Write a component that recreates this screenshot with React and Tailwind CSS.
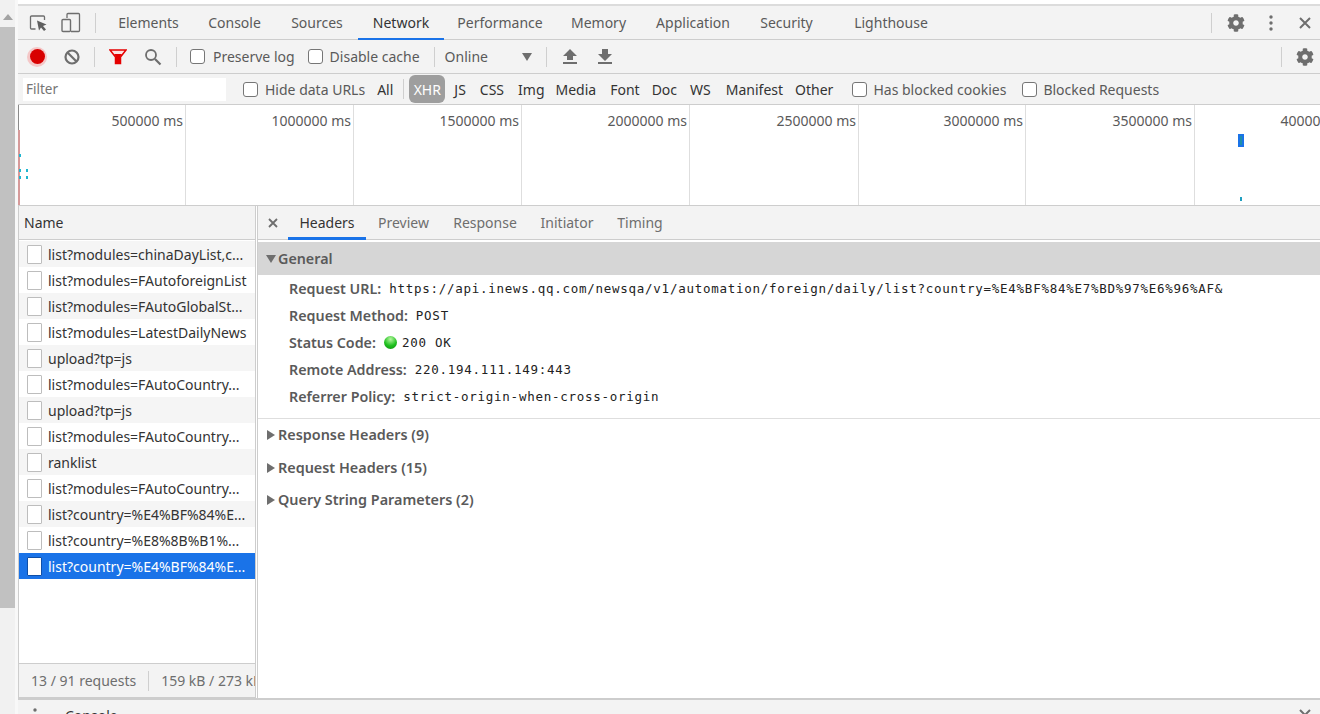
import React from "react";
import { FaCog } from "react-icons/fa";

const TABS = [
  ["Elements", "w-[89px]"],
  ["Console", "w-[83px]"],
  ["Sources", "w-[82px]"],
  ["Network", "w-[86px]"],
  ["Performance", "w-[112px]"],
  ["Memory", "w-[85px]"],
  ["Application", "w-[104px]"],
  ["Security", "w-[83px]"],
  ["Lighthouse", "w-[126px]"],
];

const TYPES = [
  ["JS", "ml-[9px]"],
  ["CSS", "ml-[14px]"],
  ["Img", "ml-[14px]"],
  ["Media", "ml-[11px]"],
  ["Font", "ml-[14px]"],
  ["Doc", "ml-[12px]"],
  ["WS", "ml-[13px]"],
  ["Manifest", "ml-[15px]"],
  ["Other", "ml-[12px]"],
];

const CELLS = [
  ["500000 ms", "w-[167px]"],
  ["1000000 ms", "w-[168px]"],
  ["1500000 ms", "w-[168px]"],
  ["2000000 ms", "w-[168px]"],
  ["2500000 ms", "w-[169px]"],
  ["3000000 ms", "w-[167px]"],
  ["3500000 ms", "w-[169px]"],
  ["4000000 ms", "w-[168px]"],
];

const ROWS = [
  "list?modules=chinaDayList,c...",
  "list?modules=FAutoforeignList",
  "list?modules=FAutoGlobalSt...",
  "list?modules=LatestDailyNews",
  "upload?tp=js",
  "list?modules=FAutoCountry...",
  "upload?tp=js",
  "list?modules=FAutoCountry...",
  "ranklist",
  "list?modules=FAutoCountry...",
  "list?country=%E4%BF%84%E...",
  "list?country=%E8%8B%B1%...",
  "list?country=%E4%BF%84%E...",
];

const DETAIL = [
  ["Preview", "w-[75px]"],
  ["Response", "w-[88px]"],
  ["Initiator", "w-[76px]"],
  ["Timing", "w-[70px]"],
];

function Sep({ cls = "" }) {
  return <div className={"w-px h-5 bg-[#cfcfcf] " + cls} />;
}

function Check({ cls = "" }) {
  return <span className={"inline-block w-[15px] h-[15px] rounded-[3px] border border-[#767676] bg-white " + cls} />;
}

function Mono({ children }) {
  return <span className="font-['DejaVu_Sans_Mono',monospace] text-[12.5px] tracking-[0.73px] text-[#222] font-normal pt-[2px]">{children}</span>;
}

function Field({ name, children }) {
  return (
    <div className="h-[27px] flex items-center pl-[31px] whitespace-nowrap">
      <span className="font-semibold text-[#5a5a5a] text-[14.3px]">{name}</span>
      <span className="flex items-center ml-[8px]">{children}</span>
    </div>
  );
}

function Section({ label }) {
  return (
    <div className="h-[32.5px] flex items-center pl-[9px]">
      <svg width="8" height="10" viewBox="0 0 8 10" className="mr-[3px]"><path d="M0 0L8 5L0 10Z" fill="#6e6e6e" /></svg>
      <span className="font-semibold text-[14.4px] text-[#5a5a5a]">{label}</span>
    </div>
  );
}

export default function App() {
  return (
    <div className="w-[1320px] h-[714px] overflow-hidden bg-white flex font-['Noto_Sans',sans-serif] text-[14px] text-[#5a5a5a]">
      {/* page scrollbar */}
      <div className="w-[15px] h-full flex flex-col bg-[#f1f1f1] shrink-0 pt-[6px]">
        <div className="h-[21px] flex items-center justify-center">
          <svg width="10" height="6" viewBox="0 0 10 6"><path d="M5 0L10 6H0Z" fill="#a3a3a3" /></svg>
        </div>
        <div className="h-[581px] bg-[#c1c1c1]" />
      </div>
      <div className="w-[3px] bg-[#f8f8f8] shrink-0" />

      <div className="flex-1 min-w-0 flex flex-col">
        <div className="h-[4px] bg-white" />
        <div className="h-[2px] bg-[#dcdcdc]" />

        {/* main tabs */}
        <div className="h-[34px] flex items-stretch bg-[#f3f3f3] border-b border-[#cdcdcd]">
          <div className="w-[11px]" />
          <div className="w-[19px] flex items-center justify-center">
            <svg width="19" height="18" viewBox="0 0 19 18" fill="none">
              <path d="M6.500 15H2.500A1 1 0 0 1 1.500 14V3A1 1 0 0 1 2.500 2H14.500A1 1 0 0 1 15.500 3V6" stroke="#6e6e6e" strokeWidth="1.300" />
              <path d="M8 6.500L10 16.500L12 13.500L15 17L17 15.500L14 12L17.500 10.500Z" fill="#5f5f5f" />
            </svg>
          </div>
          <div className="ml-[13px] w-[20px] flex items-center justify-center">
            <svg width="20" height="21" viewBox="0 0 20 21" fill="none">
              <path d="M6 6V2.500A1 1 0 0 1 7 1.500H17.500A1 1 0 0 1 18.500 2.500V18.500A1 1 0 0 1 17.500 19.500H10" stroke="#6e6e6e" strokeWidth="1.300" />
              <rect x="1" y="7.500" width="8.500" height="12" rx="1" stroke="#6e6e6e" strokeWidth="1.400" />
            </svg>
          </div>
          <div className="ml-[14px] flex items-center"><Sep /></div>
          <div className="flex ml-[8px]">
            {TABS.map(([t, w]) => (
              <div key={t} className={"relative flex items-center justify-center " + w + (t === "Network" ? " text-[#333]" : "")}>
                {t}
                {t === "Network" && <div className="absolute left-0 right-0 bottom-[-1px] h-[2px] bg-[#1a73e8]" />}
              </div>
            ))}
          </div>
          <div className="flex-1" />
          <div className="flex items-center"><Sep /></div>
          <div className="w-[48px] flex items-center justify-center text-[#6e6e6e]"><FaCog size={18} /></div>
          <div className="w-[22px] flex items-center justify-center">
            <svg width="4" height="16" viewBox="0 0 4 16"><circle cx="2" cy="2" r="1.700" fill="#6e6e6e" /><circle cx="2" cy="8" r="1.700" fill="#6e6e6e" /><circle cx="2" cy="14" r="1.700" fill="#6e6e6e" /></svg>
          </div>
          <div className="ml-[8px] w-[30px] flex items-center justify-center">
            <svg width="12" height="12" viewBox="0 0 12 12"><path d="M1 1L11 11M11 1L1 11" stroke="#6e6e6e" strokeWidth="2" /></svg>
          </div>
        </div>

        {/* network toolbar */}
        <div className="h-[34px] flex items-center bg-[#f3f3f3] border-b border-[#cdcdcd]">
          <div className="ml-[9px] w-[20px] h-[20px] rounded-full bg-[#f4c7c7] flex items-center justify-center">
            <div className="w-[15px] h-[15px] rounded-full bg-[#d80000]" />
          </div>
          <svg width="16" height="16" viewBox="0 0 16 16" fill="none" className="ml-[17px]">
            <circle cx="8" cy="8" r="6.500" stroke="#6e6e6e" strokeWidth="2.200" />
            <path d="M3.500 3.500L12.500 12.500" stroke="#6e6e6e" strokeWidth="2.200" />
          </svg>
          <Sep cls="ml-[14px]" />
          <svg width="18" height="16" viewBox="0 0 18 16" fill="none" className="ml-[14px]">
            <path d="M1 1H17L11.500 8V14.500H6.500V8Z" fill="#fbe3e3" stroke="#e50000" strokeWidth="1.500" />
            <path d="M5 5H13L11 8V14H7V8Z" fill="#e50000" />
          </svg>
          <svg width="18" height="18" viewBox="0 0 18 18" fill="none" className="ml-[17px]">
            <circle cx="7" cy="7" r="5" stroke="#6e6e6e" strokeWidth="1.800" />
            <path d="M11 11L16.500 16.500" stroke="#6e6e6e" strokeWidth="2.200" />
          </svg>
          <Sep cls="ml-[14px]" />
          <Check cls="ml-[13px]" />
          <span className="ml-[8px]">Preserve log</span>
          <Check cls="ml-[13px]" />
          <span className="ml-[7px]">Disable cache</span>
          <Sep cls="ml-[14px]" />
          <span className="ml-[10px]">Online</span>
          <svg width="10" height="8" viewBox="0 0 10 8" className="ml-[34px]"><path d="M0 0H10L5 8Z" fill="#6e6e6e" /></svg>
          <Sep cls="ml-[14px]" />
          <svg width="14" height="15" viewBox="0 0 14 15" className="ml-[16px]"><path d="M7 0L14 7H10V11H4V7H0ZM0 13H14V15H0Z" fill="#6e6e6e" /></svg>
          <svg width="14" height="15" viewBox="0 0 14 15" className="ml-[21px]"><path d="M4 0H10V5H14L7 12L0 5H4ZM0 13H14V15H0Z" fill="#6e6e6e" /></svg>
          <div className="flex-1" />
          <Sep />
          <div className="w-[38px] pl-[7px] flex items-center justify-center text-[#6e6e6e]"><FaCog size={18} /></div>
        </div>

        {/* filter row */}
        <div className="h-[31px] flex items-center bg-[#f3f3f3] border-b border-[#cdcdcd]">
          <div className="ml-[5px] w-[203px] h-[23px] bg-white pl-[3px] flex items-center text-[#757575] text-[13.5px]">Filter</div>
          <Check cls="ml-[17px]" />
          <span className="ml-[7px]">Hide data URLs</span>
          <span className="ml-[12px] text-[#333]">All</span>
          <Sep cls="ml-[10px]" />
          <span className="ml-[5px] h-[28px] w-[36px] flex items-center justify-center rounded-[6px] bg-[#9e9e9e] text-white">XHR</span>
          {TYPES.map(([t, m]) => (
            <span key={t} className={m + " text-[#333]"}>{t}</span>
          ))}
          <Check cls="ml-[19px]" />
          <span className="ml-[6px]">Has blocked cookies</span>
          <Check cls="ml-[16px]" />
          <span className="ml-[6px]">Blocked Requests</span>
        </div>

        {/* overview */}
        <div className="relative h-[101px] flex bg-white border-b border-[#cdcdcd] shrink-0">
          <div className="w-px bg-[#8a8a8a] shrink-0" />
          {CELLS.map(([t, w]) => (
            <div key={t} className={"shrink-0 border-r border-[#dedede] text-right pr-[2px] pt-[5px] whitespace-nowrap " + w}>{t}</div>
          ))}
          <div className="absolute left-0 top-[25px] bottom-0 w-[2px] bg-[#d69a9a]" />
          <div className="absolute left-[1px] top-[49px] w-[2px] h-[3px] bg-[#1fb6d0]" />
          <div className="absolute left-[1px] top-[64px] w-[2px] h-[3px] bg-[#1fb6d0]" />
          <div className="absolute left-[8px] top-[64px] w-[2px] h-[3px] bg-[#1fb6d0]" />
          <div className="absolute left-[1px] top-[71px] w-[2px] h-[3px] bg-[#1fb6d0]" />
          <div className="absolute left-[8px] top-[71px] w-[2px] h-[3px] bg-[#1fb6d0]" />
          <div className="absolute left-[1220px] top-[29px] w-[6px] h-[13px] bg-[#1a73e8]">
            <div className="ml-[2px] mt-[2px] w-[2px] h-[9px] bg-[#1f8fa8]" />
          </div>
          <div className="absolute left-[1222px] top-[92px] w-[2px] h-[4px] bg-[#1f9fc0]" />
        </div>

        {/* split */}
        <div className="flex-1 min-h-0 flex">
          {/* request list */}
          <div className="w-[238px] shrink-0 border-l border-r border-[#cdcdcd] flex flex-col">
            <div className="h-[34px] border-b border-[#cdcdcd] bg-[#f3f3f3] flex items-center pl-[5px] text-[#333] shrink-0">Name</div>
            <div className="flex-1 pt-[1px]">
              {ROWS.map((r, i) => {
                const sel = i === ROWS.length - 1;
                return (
                  <div key={i} className={"h-[26px] flex items-center pl-[8px] whitespace-nowrap overflow-hidden " + (sel ? "bg-[#1a73e8] text-white" : i % 2 === 0 ? "bg-[#f5f5f5] text-[#333]" : "bg-white text-[#333]")}>
                    <div className={"w-[15px] h-[19px] bg-white rounded-[1px] border shrink-0 " + (sel ? "border-[#0f4fa8]" : "border-[#bdbdbd]")} />
                    <span className="ml-[6px]">{r}</span>
                  </div>
                );
              })}
            </div>
            <div className="h-[35px] shrink-0 border-t border-[#cdcdcd] border-b bg-[#f3f3f3] flex items-center overflow-hidden whitespace-nowrap text-[#6e6e6e]">
              <span className="ml-[12px]">13 / 91 requests</span>
              <Sep cls="ml-[12px] shrink-0" />
              <span className="ml-[12px]">159 kB / 273 kB transferred</span>
            </div>
          </div>
          <div className="w-px bg-white shrink-0" />

          {/* details */}
          <div className="flex-1 min-w-0 border-l border-[#cdcdcd] flex flex-col">
            <div className="h-[34px] shrink-0 border-b border-[#cdcdcd] bg-[#f3f3f3] flex items-stretch">
              <div className="w-[30px] flex items-center justify-center">
                <svg width="10" height="10" viewBox="0 0 10 10"><path d="M1 1L9 9M9 1L1 9" stroke="#6e6e6e" strokeWidth="1.800" /></svg>
              </div>
              <div className="relative w-[78px] flex items-center justify-center text-[#333]">
                Headers
                <div className="absolute left-0 right-0 bottom-[-1px] h-[3px] bg-[#1a73e8]" />
              </div>
              {DETAIL.map(([t, w]) => (
                <div key={t} className={"flex items-center justify-center text-[#6e6e6e] " + w}>{t}</div>
              ))}
            </div>
            <div className="h-[2px] shrink-0" />
            <div className="h-[33px] shrink-0 bg-[#d6d6d6] flex items-center pl-[8px]">
              <svg width="10" height="8" viewBox="0 0 10 8" className="mr-[2px]"><path d="M0 0H10L5 8Z" fill="#6e6e6e" /></svg>
              <span className="font-semibold text-[#5a5a5a] text-[14.3px]">General</span>
            </div>
            <div className="pb-[8px] border-b border-[#dedede] shrink-0">
              <Field name="Request URL:"><Mono>https://api.inews.qq.com/newsqa/v1/automation/foreign/daily/list?country=%E4%BF%84%E7%BD%97%E6%96%AF&amp;</Mono></Field>
              <Field name="Request Method:"><Mono>POST</Mono></Field>
              <Field name="Status Code:">
                <span className="w-[13px] h-[13px] rounded-full bg-[radial-gradient(circle_at_50%_25%,#b6f7a0,#1fc01f_55%,#0d8a0d)] mr-[5px]" />
                <Mono>200 OK</Mono>
              </Field>
              <Field name="Remote Address:"><Mono>220.194.111.149:443</Mono></Field>
              <Field name="Referrer Policy:"><Mono>strict-origin-when-cross-origin</Mono></Field>
            </div>
            <Section label="Response Headers (9)" />
            <Section label="Request Headers (15)" />
            <Section label="Query String Parameters (2)" />
          </div>
        </div>

        {/* drawer */}
        <div className="h-[16px] shrink-0 border-t-2 border-[#cdcdcd] bg-[#f3f3f3] relative overflow-hidden">
          <svg width="4" height="16" viewBox="0 0 4 16" className="absolute left-[15px] top-[8px]"><circle cx="2" cy="2" r="1.700" fill="#6e6e6e" /><circle cx="2" cy="8" r="1.700" fill="#6e6e6e" /></svg>
          <span className="absolute left-[47px] top-[5px] text-[#333]">Console</span>
          <svg width="12" height="12" viewBox="0 0 12 12" className="absolute left-[1281px] top-[9px]"><path d="M1 1L11 11M11 1L1 11" stroke="#6e6e6e" strokeWidth="2" /></svg>
        </div>
      </div>
    </div>
  );
}
